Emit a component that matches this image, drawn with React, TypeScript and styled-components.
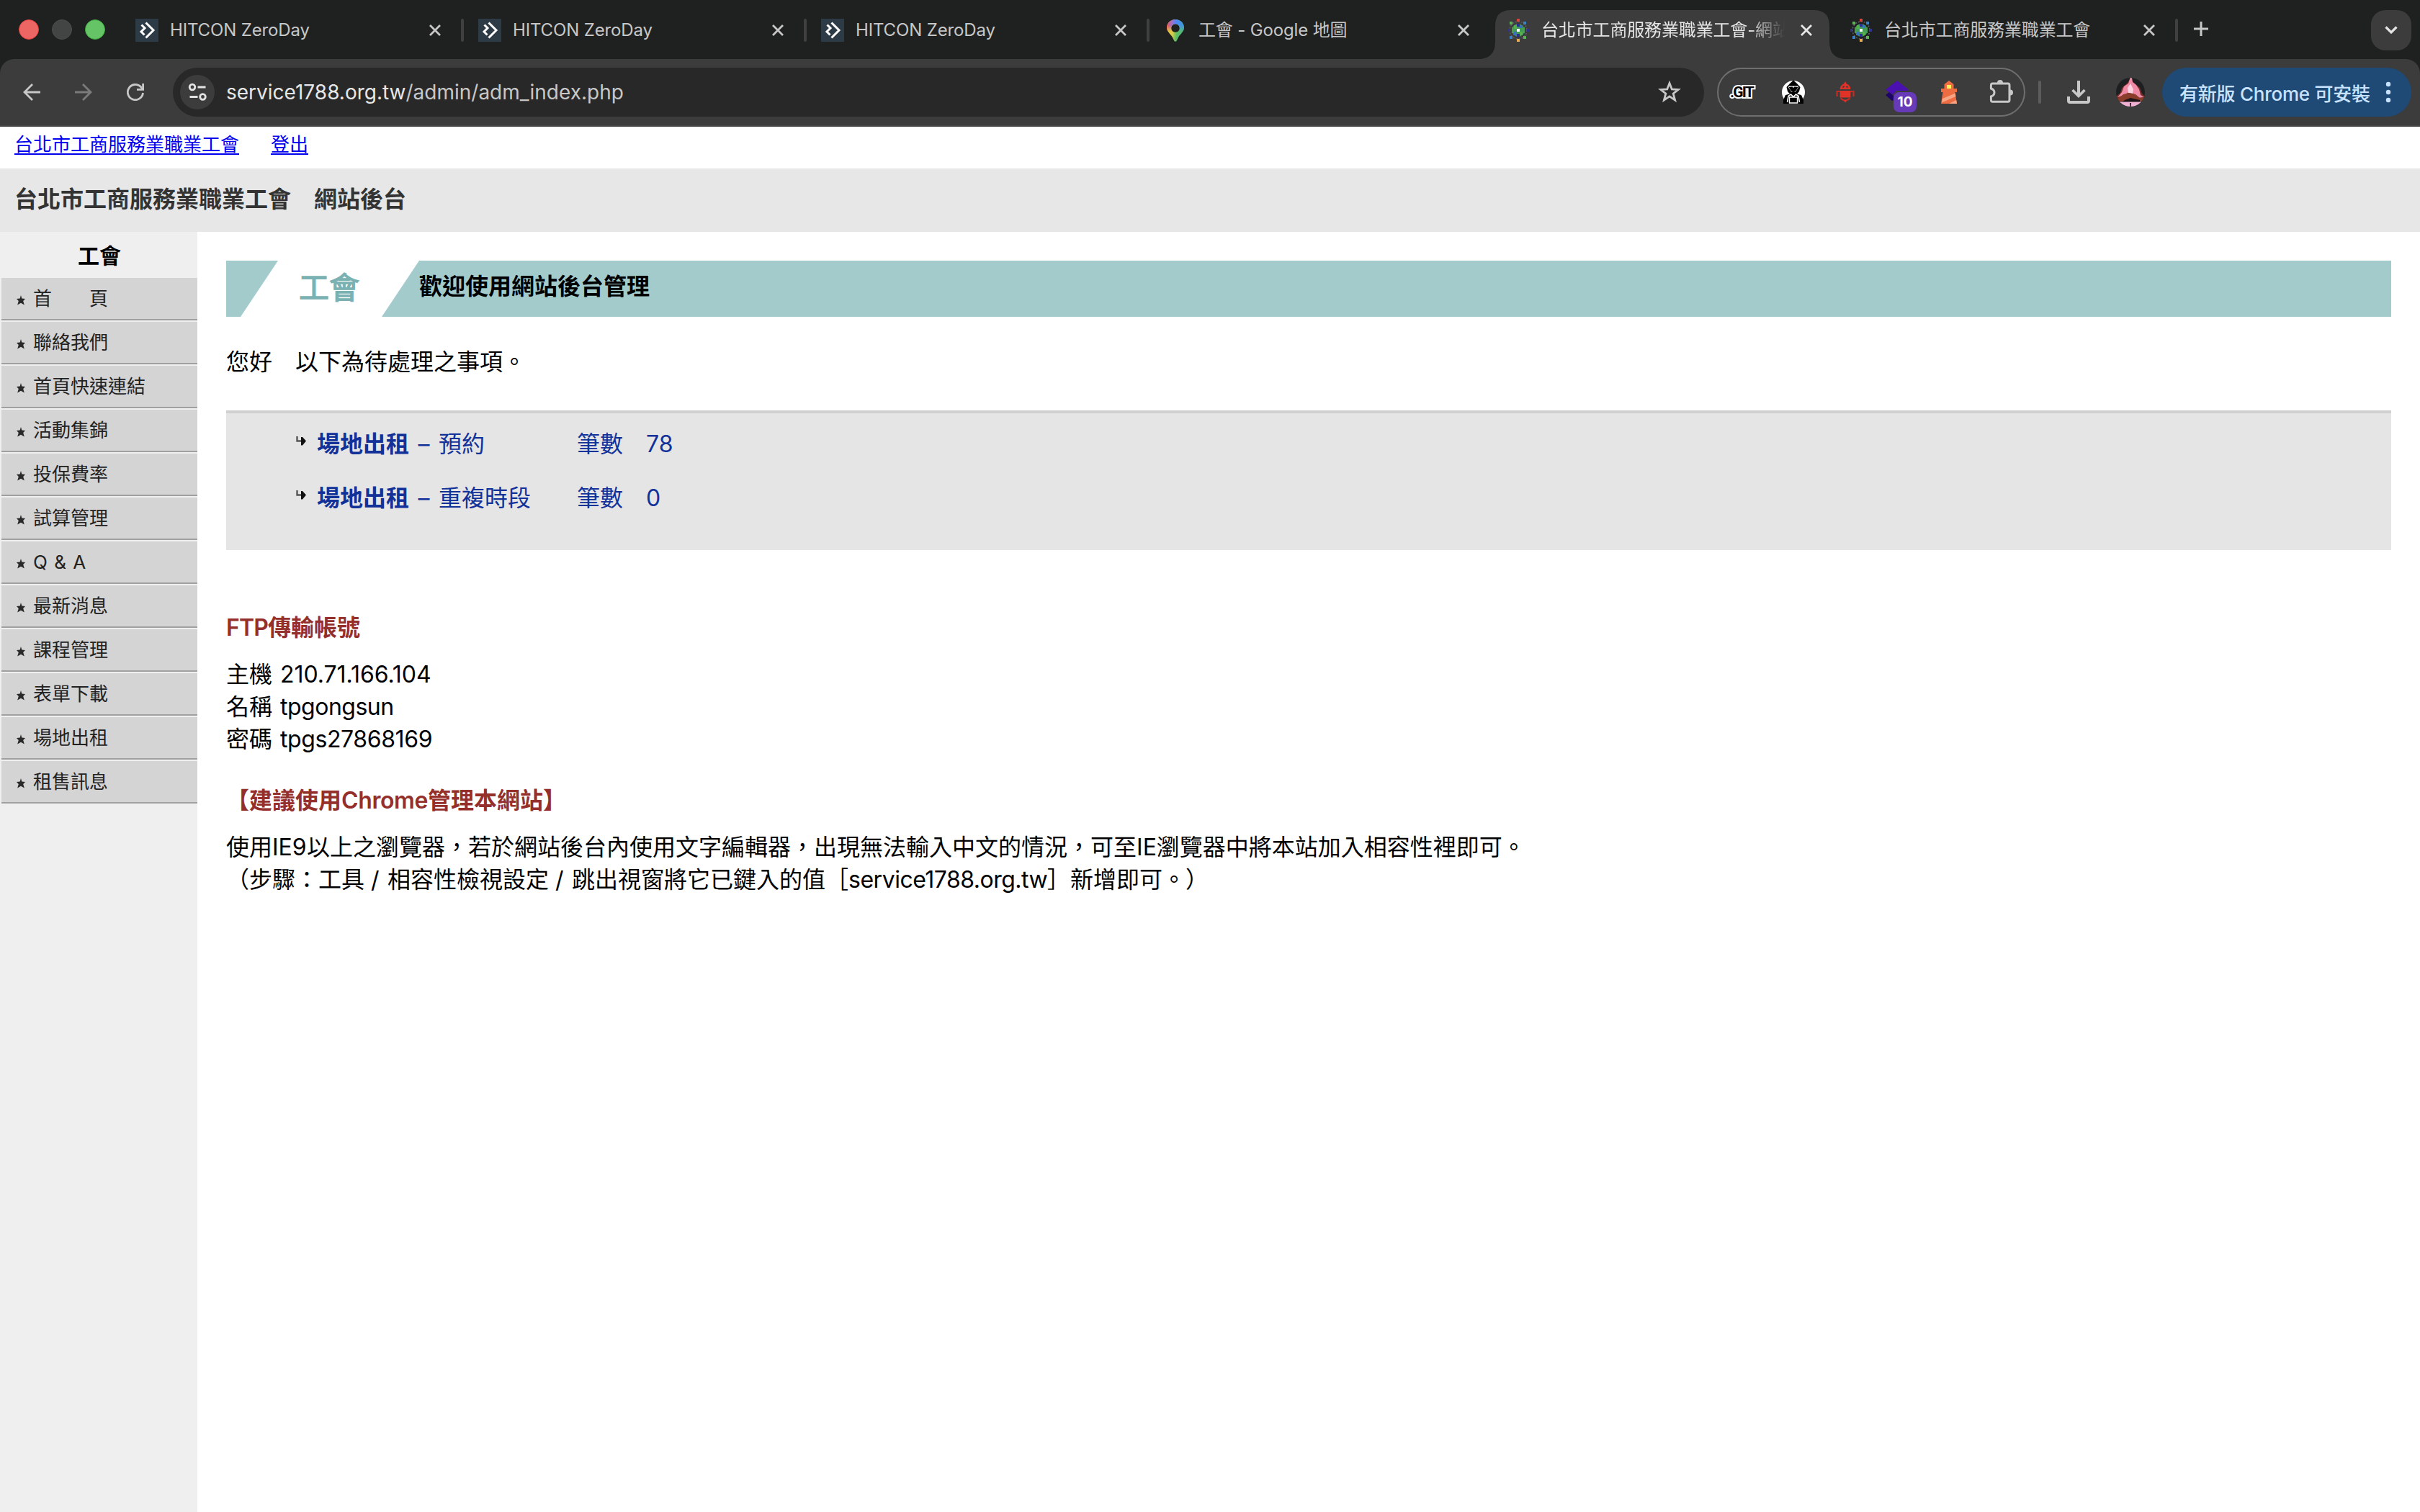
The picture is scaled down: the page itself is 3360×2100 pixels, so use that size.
import React from "react";
import styled, { createGlobalStyle, css } from "styled-components";

const Global = createGlobalStyle`
  * { box-sizing: border-box; }
  html, body { margin: 0; padding: 0; background: #ffffff; }
  body {
    font-family: Inter, "Noto Sans CJK TC", sans-serif;
    color: #000000;
    overflow: hidden;
  }
`;

const Screen = styled.div`
  width: 3360px;
  height: 2100px;
  display: flex;
  flex-direction: column;
  overflow: hidden;
  background: #ffffff;
`;

/* ---------- tab strip ---------- */

const TabStrip = styled.div`
  height: 82px;
  flex: none;
  display: flex;
  align-items: stretch;
  background: #1f2120;
`;

const Lights = styled.div`
  width: 168px;
  flex: none;
  display: flex;
  align-items: center;
  gap: 18px;
  padding-left: 26px;
`;

const Light = styled.span<{ $fill: string; $edge: string }>`
  width: 28px;
  height: 28px;
  border-radius: 50%;
  background: ${(p) => p.$fill};
  border: 1px solid ${(p) => p.$edge};
`;

const TabItem = styled.div<{ $active?: boolean; $divider?: boolean }>`
  position: relative;
  width: 476px;
  flex: none;
  display: flex;
  align-items: center;
  padding: 2px 16px 0 20px;
  color: ${(p) => (p.$active ? "#e6e6e6" : "#c7c7c7")};
  ${(p) =>
    p.$divider &&
    css`
      &::after {
        content: "";
        position: absolute;
        right: 0;
        top: 26px;
        width: 4px;
        height: 32px;
        border-radius: 2px;
        background: #404040;
      }
    `}
`;

const ActiveShape = styled.svg`
  position: absolute;
  left: -20px;
  top: 14px;
  width: 516px;
  height: 68px;
`;

const Favicon = styled.svg`
  position: relative;
  width: 32px;
  height: 32px;
  flex: none;
`;

const TabTitle = styled.div<{ $fade?: boolean }>`
  position: relative;
  width: 352px;
  margin-left: 16px;
  font-size: 24px;
  line-height: 32px;
  letter-spacing: -0.15px;
  white-space: nowrap;
  ${(p) =>
    p.$fade &&
    css`
      mask-image: linear-gradient(to right, #000 288px, transparent 338px);
    `}
`;

const CloseIcon = styled.svg`
  position: relative;
  width: 16px;
  height: 16px;
  margin-left: 8px;
  flex: none;
`;

const NewTab = styled.svg`
  width: 20px;
  height: 22px;
  margin: 29px 0 0 22px;
`;

const TabSearch = styled.div`
  width: 56px;
  height: 56px;
  margin: 14px 12px 0 auto;
  border-radius: 20px;
  background: #3c3c3c;
  display: flex;
  align-items: center;
  justify-content: center;
`;

/* ---------- toolbar ---------- */

const ToolbarBack = styled.div`
  flex: none;
  height: 94px;
  background: #1f2120;
`;

const Toolbar = styled.div`
  height: 94px;
  display: flex;
  align-items: center;
  padding: 0 12px 0 32px;
  background: #3c3c3c;
  border-bottom: 2px solid #474747;
  border-radius: 20px 20px 0 0;
`;

const NavIcon = styled.svg`
  width: 24px;
  height: 24px;
  flex: none;
  margin-right: 48px;
  &:nth-of-type(3) {
    margin-right: 40px;
  }
`;

const AddressBar = styled.div`
  width: 2126px;
  height: 68px;
  flex: none;
  display: flex;
  align-items: center;
  padding: 0 32px 0 10px;
  border-radius: 34px;
  background: #282828;
`;

const SiteInfo = styled.div`
  width: 48px;
  height: 48px;
  border-radius: 50%;
  background: #3c3c3c;
  display: flex;
  align-items: center;
  justify-content: center;
`;

const Url = styled.div`
  flex: 1;
  margin-left: 16px;
  font-size: 28px;
  line-height: 40px;
  color: #c7c7c7;
  b {
    font-weight: 400;
    color: #e6e6e6;
  }
`;

const Extensions = styled.div`
  width: 428px;
  height: 68px;
  margin-left: 18px;
  flex: none;
  display: flex;
  align-items: center;
  gap: 40px;
  padding-left: 16px;
  border: 2px solid #6f6f6f;
  border-radius: 34px;
`;

const ExtIcon = styled.div`
  position: relative;
  width: 32px;
  height: 32px;
  flex: none;
  svg {
    display: block;
    width: 32px;
    height: 32px;
    overflow: visible;
  }
`;

const CountBadge = styled.span`
  position: absolute;
  left: 11px;
  top: 16px;
  width: 32px;
  height: 28px;
  border-radius: 8px;
  background: #673ab7;
  color: #ffffff;
  font-size: 19px;
  font-weight: 700;
  line-height: 28px;
  text-align: center;
`;

const GitLabel = styled.span`
  display: block;
  width: 32px;
  font-family: Roboto, "Liberation Sans", sans-serif;
  font-size: 21px;
  font-weight: 700;
  line-height: 32px;
  letter-spacing: -1.8px;
  white-space: nowrap;
  color: #000000;
  paint-order: stroke fill;
  -webkit-text-stroke: 4px #ffffff;
`;

const ToolbarRule = styled.span`
  width: 4px;
  height: 32px;
  margin: 0 36px 0 18px;
  border-radius: 2px;
  background: #5c5c5c;
`;

const Avatar = styled.svg`
  width: 40px;
  height: 40px;
  margin: 0 24px 0 36px;
`;

const UpdateChip = styled.div`
  width: 346px;
  height: 68px;
  display: flex;
  align-items: center;
  justify-content: space-between;
  padding: 0 28px 0 24px;
  border-radius: 34px;
  background: #1f4a75;
  color: #c8e3ff;
  font-size: 26px;
  font-weight: 500;
  letter-spacing: -0.25px;
  white-space: nowrap;
`;

/* ---------- page ---------- */

const TopLinks = styled.div`
  height: 58px;
  flex: none;
  display: flex;
  gap: 44px;
  padding: 7px 0 0 20px;
  font-size: 26px;
  line-height: 36px;
  a {
    color: #0000ee;
    text-decoration: underline;
    text-decoration-thickness: 2px;
    text-underline-offset: 3px;
  }
`;

const SiteTitle = styled.h1`
  height: 88px;
  flex: none;
  margin: 0;
  padding: 0 0 0 20px;
  background: #e7e7e7;
  color: #333333;
  font-size: 32px;
  font-weight: 700;
  line-height: 86px;
`;

const Body = styled.div`
  flex: 1;
  display: flex;
  min-height: 0;
`;

const Sidebar = styled.nav`
  width: 274px;
  flex: none;
  background: #efefef;
`;

const SideHeading = styled.div`
  height: 64px;
  padding-left: 2px;
  font-size: 30px;
  font-weight: 700;
  line-height: 67px;
  text-align: center;
`;

const SideItem = styled.a`
  height: 59px;
  margin: 0 0 2px 2px;
  padding-left: 21px;
  display: flex;
  align-items: flex-start;
  background: #d4d4d4;
  border-bottom: 2px solid #a0a0a0;
  color: #222222;
  font-size: 26px;
  line-height: 57px;
  word-spacing: 2px;
  white-space: pre;
  svg {
    width: 12px;
    height: 14px;
    margin: 24px 11px 0 0;
  }
`;

const Content = styled.main`
  flex: 1;
  padding: 40px 40px 0 40px;
  font-size: 32px;
  line-height: 45px;
  white-space: pre;
`;

const Banner = styled.div`
  height: 78px;
  display: flex;
  background: #a3cbcb;
`;

const BannerMark = styled.div`
  width: 248px;
  margin-left: 20px;
  padding-left: 81px;
  background: #ffffff;
  clip-path: polygon(52px 0, 100% 0, 196px 100%, 0 100%);
  color: #7ab2b3;
  font-size: 42px;
  line-height: 75px;
  -webkit-text-stroke: 1.4px #7ab2b3;
`;

const BannerTitle = styled.div`
  font-weight: 700;
  line-height: 72px;
`;

const Greeting = styled.p`
  margin: 40px 0 0;
`;

const Pending = styled.div`
  height: 194px;
  margin-top: 45px;
  padding: 8px 0 0 97px;
  background: #e5e5e5;
  border-top: 4px solid #d0d0d0;
  color: #12329a;
`;

const PendingRow = styled.div`
  height: 75px;
  display: flex;
  line-height: 70px;
  svg {
    width: 14px;
    height: 14px;
    margin: 24px 15px 0 0;
  }
`;

const Dash = styled.span`
  width: 41px;
  text-align: center;
`;

const Kind = styled.span`
  width: 192px;
`;

const CountLabel = styled.span`
  width: 96px;
`;

const Heading = styled.h2<{ $gap: number }>`
  margin: ${(p) => p.$gap}px 0 20px;
  color: #942f2b;
  font-size: 32px;
  font-weight: 700;
  line-height: 45px;
`;

const Para = styled.p`
  margin: 0;
`;

const Latin = styled.span<{ $w?: number; $ls?: number; $semi?: boolean; $lead?: number }>`
  display: inline-block;
  ${(p) => p.$w && `width: ${p.$w}px;`}
  ${(p) => p.$semi && "font-weight: 600;"}
  margin-left: ${(p) => p.$lead ?? 0}px;
  letter-spacing: ${(p) => p.$ls ?? 0}px;
`;

/* ---------- drawings ---------- */

const HitconIcon = () => (
  <Favicon viewBox="0 0 32 32">
    <rect width="32" height="32" fill="#2d3b47" />
    <path d="M14.5 5.5 L25 16 L14.5 26.5" fill="none" stroke="#fff" strokeWidth="3" />
    <path d="M8.5 8.5 L13 13 L8 18 L12.5 22.5" fill="none" stroke="#fff" strokeWidth="3" />
  </Favicon>
);

const MapsIcon = () => (
  <Favicon viewBox="0 0 32 32">
    <defs>
      <linearGradient id="pinTop" x1="0" y1="0" x2="1" y2="0">
        <stop offset="0" stopColor="#f0525a" />
        <stop offset="0.4" stopColor="#7d7be8" />
        <stop offset="0.6" stopColor="#4a8af4" />
        <stop offset="1" stopColor="#3f9bd0" />
      </linearGradient>
      <linearGradient id="pinLow" x1="0" y1="0.4" x2="1" y2="0.6">
        <stop offset="0" stopColor="#f5b63f" />
        <stop offset="0.35" stopColor="#d8cf45" />
        <stop offset="0.6" stopColor="#5fbf62" />
        <stop offset="1" stopColor="#4cb38a" />
      </linearGradient>
      <linearGradient id="pinMask" x1="0" y1="0" x2="0" y2="1">
        <stop offset="0.3" stopColor="#fff" />
        <stop offset="0.55" stopColor="#000" />
      </linearGradient>
      <mask id="pinFade" maskUnits="userSpaceOnUse" x="0" y="0" width="32" height="32">
        <rect width="32" height="32" fill="url(#pinMask)" />
      </mask>
    </defs>
    <path
      fillRule="evenodd"
      fill="url(#pinLow)"
      d="M16 1 C9.3 1 4 6 4 12.6 C4 18 9 21 12 26 L14.5 31 Q16 32.5 17.5 31 L20 26 C23 21 28 18 28 12.6 C28 6 22.7 1 16 1 Z M16 7.2 A5.8 5.8 0 1 1 15.99 7.2 Z"
    />
    <path
      fillRule="evenodd"
      fill="url(#pinTop)"
      mask="url(#pinFade)"
      d="M16 1 C9.3 1 4 6 4 12.6 C4 18 9 21 12 26 L14.5 31 Q16 32.5 17.5 31 L20 26 C23 21 28 18 28 12.6 C28 6 22.7 1 16 1 Z M16 7.2 A5.8 5.8 0 1 1 15.99 7.2 Z"
    />
  </Favicon>
);

const UnionIcon = () => (
  <Favicon viewBox="0 0 32 32">
    <circle cx="16" cy="16" r="12" fill="none" stroke="#5a5f63" strokeWidth="1.6" strokeDasharray="2 2" />
    <circle cx="16" cy="16" r="9" fill="#3f9a57" />
    <path d="M14 7h4v4h-4zM14 21h4v4h-4z" fill="#2b2f8f" />
    <path d="M18 9h4v4h-4zM9 18h5v5h-5z" fill="#3a74b8" />
    <path d="M10 9h4v5h-4zM18 18h4v5h-4z" fill="#55b04c" />
    <path d="M22 12h3v8h-3zM7 12h3v8H7z" fill="#4a9c55" />
    <rect x="14" y="14" width="4" height="4" fill="#fff" />
    <rect x="14" y="0" width="4" height="4" fill="#d9453c" />
    <rect x="14" y="28" width="4" height="4" fill="#e8ac55" />
    <rect x="4" y="4" width="4" height="4" fill="#5fae58" />
    <rect x="23" y="4" width="4" height="4" fill="#3f80c0" />
    <rect x="4" y="24" width="4" height="4" fill="#3f80c0" />
    <rect x="23" y="24" width="4" height="4" fill="#5fae58" />
    <rect x="1" y="14" width="3" height="4" fill="#2f3390" />
    <rect x="28" y="14" width="3" height="4" fill="#2f3390" />
  </Favicon>
);

const Close = () => (
  <CloseIcon viewBox="0 0 16 16">
    <path d="M1 1 L15 15 M15 1 L1 15" stroke="currentColor" strokeWidth="2.8" />
  </CloseIcon>
);

const Star = () => (
  <svg viewBox="0 0 12 14">
    <path
      d="M6 0 L7.3 4.6 L12 5 L9.2 8 L10.8 13.4 L6 10.8 L1.2 13.4 L2.8 8 L0 5 L4.7 4.6 Z"
      fill="#2a2a2a"
    />
  </svg>
);

const TurnArrow = () => (
  <svg viewBox="0 0 14 14">
    <path d="M1.5 0 V6.5 H7" fill="none" stroke="#555" strokeWidth="2.4" />
    <path d="M7 1 L9 1 L14 6.5 L9 12.5 L7 12.5 Z" fill="#111" />
  </svg>
);

const menu = [
  "首　　頁",
  "聯絡我們",
  "首頁快速連結",
  "活動集錦",
  "投保費率",
  "試算管理",
  "Q & A",
  "最新消息",
  "課程管理",
  "表單下載",
  "場地出租",
  "租售訊息",
];

const pending = [
  { kind: "預約", count: "78" },
  { kind: "重複時段", count: "0" },
];

export default function App() {
  return (
    <Screen lang="zh-Hant">
      <Global />
      <TabStrip>
        <Lights>
          <Light $fill="#ee6664" $edge="#e0413d" />
          <Light $fill="#434544" $edge="#4c4e4d" />
          <Light $fill="#65c466" $edge="#3fa83f" />
        </Lights>
        {[0, 1, 2].map((i) => (
          <TabItem key={i} $divider>
            <HitconIcon />
            <TabTitle>HITCON ZeroDay</TabTitle>
            <Close />
          </TabItem>
        ))}
        <TabItem>
          <MapsIcon />
          <TabTitle>工會 - Google 地圖</TabTitle>
          <Close />
        </TabItem>
        <TabItem $active>
          <ActiveShape viewBox="0 0 516 68">
            <path
              d="M0 68 Q24 68 24 44 V22 Q24 0 46 0 H466 Q488 0 488 22 V44 Q488 68 512 68 Z"
              fill="#3c3c3c"
            />
          </ActiveShape>
          <UnionIcon />
          <TabTitle $fade>台北市工商服務業職業工會-網站</TabTitle>
          <Close />
        </TabItem>
        <TabItem $divider>
          <UnionIcon />
          <TabTitle>台北市工商服務業職業工會</TabTitle>
          <Close />
        </TabItem>
        <NewTab viewBox="0 0 20 22">
          <path d="M10 1 V21 M0 11 H20" stroke="#c7c7c7" strokeWidth="3" />
        </NewTab>
        <TabSearch>
          <svg width="18" height="12" viewBox="0 0 18 12">
            <path d="M1.5 1.5 L9 9 L16.5 1.5" fill="none" stroke="#e3e3e3" strokeWidth="3.2" />
          </svg>
        </TabSearch>
      </TabStrip>

      <ToolbarBack>
        <Toolbar>
          <NavIcon viewBox="0 0 24 24">
            <path d="M24 12 H2 M13 1 L2 12 L13 23" fill="none" stroke="#c7c7c7" strokeWidth="2.8" />
          </NavIcon>
          <NavIcon viewBox="0 0 24 24">
            <path d="M0 12 H22 M11 1 L22 12 L11 23" fill="none" stroke="#7b7b7b" strokeWidth="2.8" />
          </NavIcon>
          <NavIcon viewBox="0 0 24 24">
            <path
              d="M22.5 13 A10.6 10.6 0 1 1 19.5 4.6 L22 7.6"
              fill="none"
              stroke="#c7c7c7"
              strokeWidth="2.8"
            />
            <path d="M22.6 0 V8.4 H14" fill="none" stroke="#c7c7c7" strokeWidth="2.8" />
          </NavIcon>
          <AddressBar>
            <SiteInfo>
              <svg width="26" height="26" viewBox="0 0 26 26" fill="none" stroke="#e3e3e3" strokeWidth="2.8">
                <circle cx="6" cy="6" r="3.8" />
                <path d="M13.5 6 H24.5 M2.5 19.5 H13.5" />
                <circle cx="20.5" cy="19.5" r="3.8" />
              </svg>
            </SiteInfo>
            <Url>
              <b>service1788.org.tw</b>/admin/adm_index.php
            </Url>
            <svg width="32" height="32" viewBox="0 0 32 32">
              <path
                d="M16 3.5 L19.3 12 L28.2 12.4 L21.2 18 L23.6 27 L16 21.9 L8.4 27 L10.8 18 L3.8 12.4 L12.7 12 Z"
                fill="none"
                stroke="#c7c7c7"
                strokeWidth="2.8"
              />
            </svg>
          </AddressBar>
          <Extensions>
            <ExtIcon>
              <GitLabel>.GIT</GitLabel>
            </ExtIcon>
            <ExtIcon>
              <svg viewBox="0 0 32 32">
                <circle cx="16" cy="16" r="16" fill="#fff" />
                <path
                  d="M16 -0.5 L21 4 L25.5 9 L24 15 L21 18.5 L27 20 L30 27 V32 H2 V27 L5 20 L11 18.5 L8 15 L6.5 9 L11 4 Z"
                  fill="#000"
                />
                <path d="M9.5 7.5 H22.5 L23 9.5 L19 15.5 H13 L9 9.5 Z" fill="#fff" />
                <path d="M9.5 9 L14.5 8.5 L16 10 L17.5 8.5 L22.5 9 L20 13.5 L16 16.5 L12 13.5 Z" fill="#000" />
                <path
                  d="M7.5 30 L9 21.5 L12.5 19 L16 22.5 L19.5 19 L23 21.5 L24.5 30"
                  fill="none"
                  stroke="#fff"
                  strokeWidth="1.6"
                />
                <path d="M10.5 23 H21.5 V31 H10.5 Z" fill="#000" stroke="#fff" strokeWidth="1.4" />
              </svg>
            </ExtIcon>
            <ExtIcon>
              <svg viewBox="0 0 32 32">
                <g fill="#e03227">
                  <path
                    fillRule="evenodd"
                    d="M16 1 L18 4.5 Q23 6 23.5 12 H8.5 Q9 6 14 4.5 Z M12.6 7 L15.4 8.6 L12.4 10.4 Z M19.4 7 L16.6 8.6 L19.6 10.4 Z"
                  />
                  <path d="M8.6 14 H23.4 V23.5 H8.6 Z" />
                  <path d="M13 26.5 H19 L16 30.5 Z" />
                </g>
                <path
                  d="M9 15 H4.5 V22 M23 15 H27.5 V22 M9.5 24.5 L14 27.5 M22.5 24.5 L18 27.5"
                  fill="none"
                  stroke="#c42c23"
                  strokeWidth="2.2"
                />
              </svg>
            </ExtIcon>
            <ExtIcon>
              <svg viewBox="0 0 32 32">
                <path d="M0 20 L5 16 L12 22 V27 L9 28 Z" fill="#1c0566" />
                <path d="M16 0 L32 12.5 L30 14 H15 L10 19.5 L0 12.5 Z" fill="#4a10b0" />
              </svg>
              <CountBadge>10</CountBadge>
            </ExtIcon>
            <ExtIcon>
              <svg viewBox="0 0 32 32">
                <path d="M16 0 L22.5 5 V11 H27 V16 H24.5 L27 32 H5 L7.5 16 H5 V11 H9.5 V5 Z" fill="#ee6c41" />
                <rect x="13" y="6" width="6" height="5" fill="#fdf05a" />
                <path d="M7 25 L24.8 17.5 L25.4 22 L6 30.5 Z" fill="#f6a585" />
                <path d="M16 32 L26.2 27 L27 32 Z" fill="#f6a585" />
              </svg>
            </ExtIcon>
            <ExtIcon>
              <svg viewBox="0 0 32 32">
                <path
                  d="M2.4 6.4 Q2.4 3.9 4.4 3.9 H26 Q28 3.9 28 6.4 V27 Q28 29.2 26 29.2 H4.4 Q2.4 29.2 2.4 27 V22 Q7 20.5 7 16.5 Q7 12.5 2.4 11 Z"
                  fill="none"
                  stroke="#c7c7c7"
                  strokeWidth="3"
                />
                <path d="M11 3 A4 4 0 0 1 19 3 Z M29 12.5 A4 4 0 0 1 29 20.5 Z" fill="#c7c7c7" />
              </svg>
            </ExtIcon>
          </Extensions>
          <ToolbarRule />
          <svg width="32" height="32" viewBox="0 0 32 32" fill="none" stroke="#c7c7c7">
            <path d="M16 0 V21" strokeWidth="4" />
            <path d="M7.5 13 L16 21.5 L24.5 13" strokeWidth="3.6" />
            <path d="M2 22 V28 Q2 30 4 30 H28 Q30 30 30 28 V22" strokeWidth="4" />
          </svg>
          <Avatar viewBox="0 0 40 40">
            <clipPath id="avatarClip">
              <circle cx="20" cy="20" r="20" />
            </clipPath>
            <g clipPath="url(#avatarClip)">
              <rect width="40" height="40" fill="#1d1f20" />
              <path d="M19.5 2 L26 8 L33 14 L36 22 L40 26 V30 H0 V26 L6 21 L8 14 L16 7 Z" fill="#7a2f28" />
              <path
                d="M19.5 0 H22 L23 6 L28 10 L32 16 L34 24 L39 27 L30 28 L20 18 L12 24 L2 27 L8 20 L11 12 L17 8 Z"
                fill="#ee8aa6"
              />
              <path d="M20 8 L24 16 L23 22 L17 21 L16 14 Z" fill="#fbd3e0" />
              <path d="M2 30 L10 23 L18 21 L27 23 L33 28 L38 27 V33 H2 Z" fill="#8a3d2a" />
              <path d="M12 31 L20 28 L33 31 V34 H8 Z" fill="#1d1416" />
              <rect y="33.5" width="40" height="7" fill="#f0b1d3" />
              <path d="M19 35 H21 V40 H19.5 Z" fill="#3a2030" />
            </g>
          </Avatar>
          <UpdateChip>
            有新版 Chrome 可安裝
            <svg width="8" height="30" viewBox="0 0 8 30" fill="#c8e3ff">
              <circle cx="4" cy="4" r="3.2" />
              <circle cx="4" cy="15" r="3.2" />
              <circle cx="4" cy="26" r="3.2" />
            </svg>
          </UpdateChip>
        </Toolbar>
      </ToolbarBack>

      <TopLinks>
        <a>台北市工商服務業職業工會</a>
        <a>登出</a>
      </TopLinks>
      <SiteTitle>台北市工商服務業職業工會　網站後台</SiteTitle>

      <Body>
        <Sidebar>
          <SideHeading>工會</SideHeading>
          {menu.map((label) => (
            <SideItem key={label}>
              <Star />
              {label}
            </SideItem>
          ))}
        </Sidebar>

        <Content>
          <Banner>
            <BannerMark>工會</BannerMark>
            <BannerTitle>歡迎使用網站後台管理</BannerTitle>
          </Banner>
          <Greeting>您好　以下為待處理之事項。</Greeting>

          <Pending>
            {pending.map((row) => (
              <PendingRow key={row.kind}>
                <TurnArrow />
                <b>場地出租</b>
                <Dash>–</Dash>
                <Kind>{row.kind}</Kind>
                <CountLabel>筆數</CountLabel>
                <span>{row.count}</span>
              </PendingRow>
            ))}
          </Pending>

          <Heading $gap={85}>
            <Latin $w={58} $ls={-0.8} $semi>FTP</Latin>傳輸帳號
          </Heading>
          <Para>
            主機 <Latin $lead={2} $ls={-0.05}>210.71.166.104</Latin>
            {"\n"}名稱 <Latin $lead={2} $ls={-0.5}>tpgongsun</Latin>
            {"\n"}密碼 <Latin $lead={2} $ls={-0.4}>tpgs27868169</Latin>
          </Para>

          <Heading $gap={40}>
            【建議使用<Latin $w={120} $ls={-0.4} $semi>Chrome</Latin>管理本網站】
          </Heading>
          <Para>
            使用<Latin $w={48}>IE9</Latin>
            以上之瀏覽器，若於網站後台內使用文字編輯器，出現無法輸入中文的情況，可至
            <Latin>IE</Latin>瀏覽器中將本站加入相容性裡即可。
            {"\n"}（步驟：工具<Latin $w={32}> / </Latin>相容性檢視設定<Latin $w={32}> / </Latin>
            跳出視窗將它已鍵入的值［<Latin $w={276} $ls={-0.5}>service1788.org.tw</Latin>］新增即可。）
          </Para>
        </Content>
      </Body>
    </Screen>
  );
}
